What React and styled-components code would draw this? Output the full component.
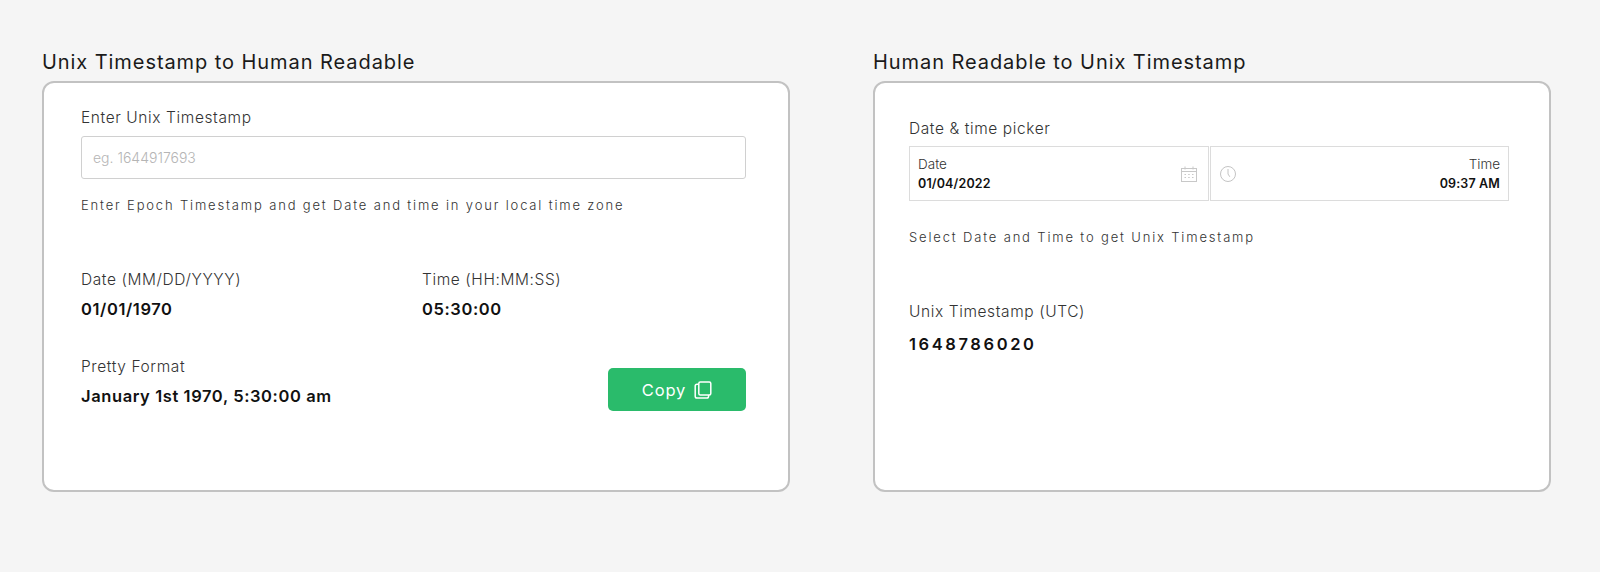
import React from "react";
import styled, { createGlobalStyle } from "styled-components";

const GlobalStyle = createGlobalStyle`
  html, body {
    margin: 0;
    background: #f5f5f5;
    font-family: Inter, "Noto Sans", "Liberation Sans", sans-serif;
    color: #111;
  }
`;

const Page = styled.div`
  display: flex;
  gap: 83px;
  height: 572px;
  box-sizing: border-box;
  padding: 50px 49px 0 42px;
`;

const Section = styled.section`
  width: ${(p) => p.$width}px;
  flex: none;
`;

const Heading = styled.h2`
  margin: 0 0 6px;
  font-size: 20px;
  line-height: 25px;
  font-weight: 400;
  letter-spacing: 0.93px;
  color: #1a1a1a;
`;

const Card = styled.div`
  box-sizing: border-box;
  height: 411px;
  background: #fff;
  border: 2px solid #c2c2c2;
  border-radius: 12px;
  padding: ${(p) => p.$padding};
`;

const Label = styled.div`
  font-size: 15.5px;
  line-height: 20px;
  font-weight: 300;
  letter-spacing: 0.6px;
  color: #333;
`;

const Value = styled.div`
  margin-top: ${(p) => p.$top || 8}px;
  font-size: 16.5px;
  line-height: 22px;
  font-weight: 600;
  color: #111;
  letter-spacing: ${(p) => p.$spacing || 0.6}px;
`;

const Input = styled.input`
  display: block;
  box-sizing: border-box;
  width: 100%;
  height: 43px;
  margin-top: 8px;
  padding: 0 11px;
  border: 1px solid #d0d0d0;
  border-radius: 3px;
  background: #fff;
  outline: none;
  font: 300 14px Inter, sans-serif;

  &::placeholder {
    color: #b5b5b5;
    opacity: 1;
  }
`;

const Hint = styled.p`
  margin: ${(p) => p.$margin};
  font-size: 13px;
  line-height: 16px;
  font-weight: 300;
  letter-spacing: 1.84px;
  color: #333;
`;

const Fields = styled.div`
  display: grid;
  grid-template-columns: 341px 1fr;
  margin-top: 57px;
`;

const ResultBlock = styled.div`
  margin-top: 57px;
`;

const FooterRow = styled.div`
  display: flex;
  justify-content: space-between;
  align-items: flex-start;
  margin-top: 37px;
`;

const CopyButton = styled.button`
  display: flex;
  align-items: center;
  justify-content: center;
  gap: 8px;
  width: 138px;
  height: 43px;
  margin-top: 11px;
  padding: 0;
  border: 0;
  border-radius: 5px;
  background: #2abb6b;
  color: #fff;
  font: 400 16.5px Inter, sans-serif;
  letter-spacing: 0.9px;
`;

const Picker = styled.div`
  display: grid;
  grid-template-columns: 1fr 1fr;
  column-gap: 1px;
  margin-top: 7px;
`;

const PickerCell = styled.div`
  display: flex;
  align-items: center;
  justify-content: space-between;
  box-sizing: border-box;
  height: 55px;
  padding: ${(p) => p.$padding};
  border: 1px solid #dcdcdc;
`;

const PickerText = styled.div`
  padding-top: 1px;
  text-align: ${(p) => p.$align || "left"};
`;

const PickerLabel = styled.div`
  font-size: 13.5px;
  line-height: 17px;
  font-weight: 300;
  color: #333;
`;

const PickerValue = styled.div`
  margin-top: 2px;
  font-size: 12.5px;
  line-height: 17px;
  font-weight: 600;
  letter-spacing: 0.15px;
  color: #111;
`;

const CopyIcon = () => (
  <svg width="18" height="18" viewBox="0 0 18 18" fill="none" stroke="#fff" strokeWidth="1.5">
    <rect x="4.8" y="1" width="12" height="13" rx="1.5" />
    <path d="M4.8 3.2H3A1.8 1.8 0 0 0 1.2 5v10.2A1.8 1.8 0 0 0 3 17h9.8a1.8 1.8 0 0 0 1.8-1.8V14" />
  </svg>
);

const CalendarIcon = () => (
  <svg width="16" height="16" viewBox="0 0 16 16" fill="none" stroke="#c8c8c8" strokeWidth="1">
    <rect x="0.5" y="2.5" width="15" height="13" />
    <path d="M0.5 5.5h15M4 0.5v3M12 0.5v3" />
    <path d="M3.5 8.5h1.5M7.2 8.5h1.5M11 8.5h1.5M3.5 11.5h1.5M7.2 11.5h1.5M11 11.5h1.5" strokeWidth="1.2" />
  </svg>
);

const ClockIcon = () => (
  <svg width="16" height="16" viewBox="0 0 16 16" fill="none" stroke="#c4c4c4" strokeWidth="1">
    <circle cx="8" cy="8" r="7.5" />
    <path d="M8 3v5l1.8 2.8" />
  </svg>
);

export default function App() {
  return (
    <>
      <GlobalStyle />
      <Page>
        <Section $width={748}>
          <Heading>Unix Timestamp to Human Readable</Heading>
          <Card $padding="25px 42px 0 37px">
            <Label>Enter Unix Timestamp</Label>
            <Input placeholder="eg. 1644917693" />
            <Hint $margin="18px 0 0">Enter Epoch Timestamp and get Date and time in your local time zone</Hint>
            <Fields>
              <div>
                <Label>Date (MM/DD/YYYY)</Label>
                <Value>01/01/1970</Value>
              </div>
              <div>
                <Label>Time (HH:MM:SS)</Label>
                <Value>05:30:00</Value>
              </div>
            </Fields>
            <FooterRow>
              <div>
                <Label>Pretty Format</Label>
                <Value>January 1st 1970, 5:30:00 am</Value>
              </div>
              <CopyButton>
                Copy <CopyIcon />
              </CopyButton>
            </FooterRow>
          </Card>
        </Section>
        <Section $width={678}>
          <Heading>Human Readable to Unix Timestamp</Heading>
          <Card $padding="36px 40px 0 34px">
            <Label>Date &amp; time picker</Label>
            <Picker>
              <PickerCell $padding="0 11px 0 8px">
                <PickerText>
                  <PickerLabel>Date</PickerLabel>
                  <PickerValue>01/04/2022</PickerValue>
                </PickerText>
                <CalendarIcon />
              </PickerCell>
              <PickerCell $padding="0 8px 0 9px">
                <ClockIcon />
                <PickerText $align="right">
                  <PickerLabel>Time</PickerLabel>
                  <PickerValue>09:37 AM</PickerValue>
                </PickerText>
              </PickerCell>
            </Picker>
            <Hint $margin="28px 0 0">Select Date and Time to get Unix Timestamp</Hint>
            <ResultBlock>
              <Label>Unix Timestamp (UTC)</Label>
              <Value $spacing={2.6} $top={11}>1648786020</Value>
            </ResultBlock>
          </Card>
        </Section>
      </Page>
    </>
  );
}
